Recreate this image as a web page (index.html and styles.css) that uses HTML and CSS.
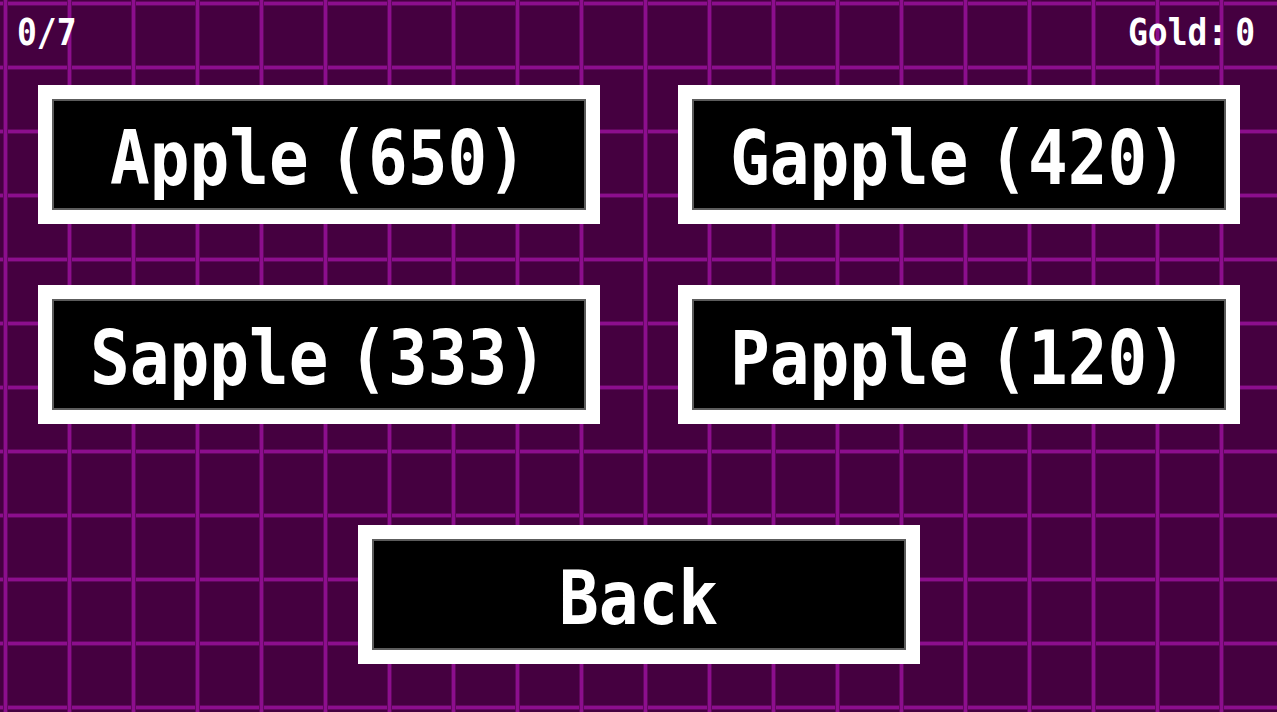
FILE: index.html
```html
<!DOCTYPE html>
<html lang="en">
<head>
    <meta charset="UTF-8">
    <meta name="viewport" content="width=device-width, initial-scale=1.0">
    <title>Shop</title>
    <link rel="stylesheet" href="styles.css">
</head>
<body>
    <header class="hud">
        <span class="hud-text">0/7</span>
        <span class="hud-text">Gold: 0</span>
    </header>

    <main class="shop">
        <div class="shop-grid">
            <button class="pixel-btn"><span class="pixel-face"><span class="label">Apple (650)</span></span></button>
            <button class="pixel-btn"><span class="pixel-face"><span class="label">Gapple (420)</span></span></button>
            <button class="pixel-btn"><span class="pixel-face"><span class="label">Sapple (333)</span></span></button>
            <button class="pixel-btn"><span class="pixel-face"><span class="label">Papple (120)</span></span></button>
        </div>

        <button class="pixel-btn back-btn"><span class="pixel-face"><span class="label">Back</span></span></button>
    </main>
</body>
</html>
```

FILE: styles.css
```css
html, body {
    height: 100%;
}

body {
    margin: 0;
    overflow: hidden;
    font-family: "DejaVu Sans Mono", "Liberation Mono", monospace;
    font-weight: bold;
    color: #fff;
    background-color: #450040;
    /* 64px grid with soft magenta lines */
    background-image:
        linear-gradient(90deg, #62075f 0, #62075f 1px, #8c0e8d 1px, #8c0e8d 4px, #62075f 4px, #62075f 5px, transparent 5px),
        linear-gradient(180deg, #62075f 0, #62075f 1px, #8c0e8d 1px, #8c0e8d 4px, #62075f 4px, #62075f 5px, transparent 5px);
    background-size: 64px 100%, 100% 64px;
    background-position: 3px 0, 0 1px;
}

.hud {
    height: 85px;
    box-sizing: border-box;
    padding: 14px 22px 0 17px;
    display: flex;
    justify-content: space-between;
    align-items: flex-start;
}

.hud-text {
    display: inline-block;
    font-size: 33px;
    line-height: 33px;
    word-spacing: -12px;
    transform: scaleY(1.12);
    transform-origin: top;
}

.shop {
    display: flex;
    flex-direction: column;
    align-items: center;
}

.shop-grid {
    display: grid;
    grid-template-columns: 562px 562px;
    column-gap: 78px;
    row-gap: 61px;
}

.pixel-btn {
    width: 562px;
    height: 139px;
    padding: 0;
    border: 14px solid #fff;
    background: #fff;
    cursor: pointer;
    font: inherit;
    color: inherit;
}

.pixel-face {
    display: flex;
    justify-content: center;
    align-items: center;
    height: 100%;
    box-sizing: border-box;
    border: 2px solid #5c5c5c;
    background-color: #000;
}

.label {
    display: inline-block;
    font-size: 66px;
    line-height: 80px;
    word-spacing: -20px;
    white-space: nowrap;
    transform: translateY(4px) scaleY(1.13);
}

.back-btn {
    margin-top: 101px;
}
```
